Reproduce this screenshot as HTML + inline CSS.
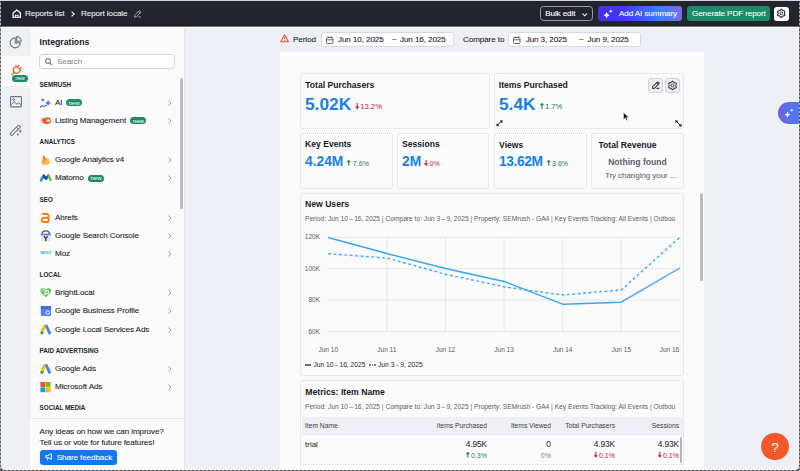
<!DOCTYPE html>
<html><head><meta charset="utf-8"><style>
html,body{margin:0;padding:0;}
body{width:800px;height:471px;overflow:hidden;position:relative;background:#eef0f6;font-family:"Liberation Sans", sans-serif;}
.t{position:absolute;line-height:1;white-space:nowrap;font-family:"Liberation Sans", sans-serif;}
</style></head><body>
<div style="position:absolute;left:0px;top:0px;width:800px;height:25px;background:#22252c;"></div>
<div style="position:absolute;left:0px;top:25px;width:800px;height:1px;background:#16181c;"></div>
<div style="position:absolute;left:0px;top:26px;width:800px;height:1px;background:#75777c;"></div>
<div style="position:absolute;left:0px;top:27px;width:800px;height:1px;background:#ffffff;"></div>
<svg style="position:absolute;left:11.5px;top:9px;overflow:visible" width="9.5" height="9.5" viewBox="0 0 9.5 9.5"><path d="M1.1 4 L4.75 0.9 L8.4 4 V8.4 H1.1 Z" fill="none" stroke="#f2f3f5" stroke-width="1.35" stroke-linejoin="round"/><path d="M3.5 8.4 V6.2 H6 V8.4" fill="none" stroke="#f2f3f5" stroke-width="1.1"/></svg>
<div class="t" style="left:25.00px;top:10.04px;font-size:8.1px;font-weight:400;color:#eceef2;-webkit-text-stroke:0.1px currentColor;letter-spacing:-0.1px;">Reports list</div>
<svg style="position:absolute;left:71px;top:11px;overflow:visible" width="4" height="6" viewBox="0 0 4 6"><path d="M0.6 0.6 L3.2 3 L0.6 5.4" fill="none" stroke="#f2f3f5" stroke-width="1.2"/></svg>
<div class="t" style="left:81.00px;top:10.04px;font-size:8.1px;font-weight:400;color:#eceef2;-webkit-text-stroke:0.1px currentColor;letter-spacing:-0.1px;">Report locale</div>
<svg style="position:absolute;left:132.5px;top:9.2px;overflow:visible" width="9.5" height="9.5" viewBox="0 0 24 24"><path d="M4 20h4l10.5 -10.5a2.828 2.828 0 1 0 -4 -4l-10.5 10.5v4 M13.5 6.5l4 4 M14 20h5" fill="none" stroke="#a3a7ae" stroke-width="2.40" stroke-linecap="round" stroke-linejoin="round"/></svg>
<div style="position:absolute;left:540px;top:6.2px;width:53.2px;height:15.3px;box-sizing:border-box;border:1px solid #9a9ea6;border-radius:3.5px;"></div>
<div class="t" style="left:545.20px;top:9.64px;font-size:8.1px;font-weight:400;color:#ffffff;-webkit-text-stroke:0.1px currentColor;letter-spacing:-0.1px;">Bulk edit</div>
<svg style="position:absolute;left:582px;top:12.5px;overflow:visible" width="5.5" height="3.5" viewBox="0 0 5.5 3.5"><path d="M0.6 0.6 L2.75 2.8 L4.9 0.6" fill="none" stroke="#fff" stroke-width="1.1"/></svg>
<div style="position:absolute;left:597.6px;top:6.3px;width:84.2px;height:14.5px;border-radius:3px;background:linear-gradient(75deg,#4f2de6 0%,#4437ee 30%,#3d62f2 55%,#3b7ef5 72%,#5d78ee 88%,#8068e4 100%);"></div>
<svg style="position:absolute;left:0;top:0;overflow:visible" width="700" height="30"><path d="M606.6 12.100000000000001 Q607.048 14.852 609.8000000000001 15.3 Q607.048 15.748000000000001 606.6 18.5 Q606.152 15.748000000000001 603.4 15.3 Q606.152 14.852 606.6 12.100000000000001Z" fill="#ffffff"/><path d="M610.8 9.299999999999999 Q611.0659999999999 10.934 612.6999999999999 11.2 Q611.0659999999999 11.466 610.8 13.1 Q610.534 11.466 608.9 11.2 Q610.534 10.934 610.8 9.299999999999999Z" fill="#ffffff"/></svg>
<div class="t" style="left:619.00px;top:9.64px;font-size:8.1px;font-weight:400;color:#ffffff;-webkit-text-stroke:0.1px currentColor;letter-spacing:-0.1px;">Add AI summary</div>
<div style="position:absolute;left:687px;top:6px;width:83px;height:15px;border-radius:3px;background:#1b8b68;"></div>
<div class="t" style="left:692.00px;top:9.64px;font-size:8.1px;font-weight:400;color:#ffffff;-webkit-text-stroke:0.1px currentColor;letter-spacing:-0.1px;">Generate PDF report</div>
<div style="position:absolute;left:774px;top:6.5px;width:15px;height:14px;border-radius:3px;background:#ffffff;"></div>
<svg style="position:absolute;left:777.2px;top:9.2px;overflow:visible" width="8.6" height="8.6"><path d="M4.30 0.09 L2.71 1.54 L0.65 2.19 L1.12 4.30 L0.65 6.41 L2.71 7.06 L4.30 8.51 L5.89 7.06 L7.95 6.41 L7.48 4.30 L7.95 2.19 L5.89 1.54 Z" fill="none" stroke="#22252c" stroke-width="1.1" stroke-linejoin="round"/><circle cx="4.3" cy="4.3" r="1.38" fill="none" stroke="#22252c" stroke-width="0.99"/></svg>
<div style="position:absolute;left:0px;top:28px;width:185px;height:443px;background:#fbfbfc;"></div>
<div style="position:absolute;left:1px;top:28px;width:29.7px;height:28.2px;background:#eef0f5;border-radius:0 2px 4px 0;"></div>
<div style="position:absolute;left:1px;top:86px;width:29.5px;height:385px;background:#eef0f5;border-radius:0 6px 0 0;"></div>
<div style="position:absolute;left:184px;top:28px;width:1px;height:443px;background:#e3e5ea;"></div>
<svg style="position:absolute;left:10px;top:36px;overflow:visible" width="12" height="12" viewBox="0 0 12 12"><path d="M5.2 1.9 A5 5 0 1 0 10.2 6.9 H5.2 Z" fill="none" stroke="#6e727b" stroke-width="1.1" stroke-linejoin="round"/><path d="M6.7 0.6 A4.6 4.6 0 0 1 11.3 5.2 H6.7 Z" fill="none" stroke="#6e727b" stroke-width="1.1" stroke-linejoin="round"/></svg>
<svg style="position:absolute;left:0;top:0;overflow:visible" width="40" height="90"><g transform="translate(16.3,70.3) rotate(45)" fill="none" stroke="#ee5a2a" stroke-width="1.15" stroke-linecap="round"><path d="M-1.6 -5.6 V-3 M1.6 -5.6 V-3"/><path d="M-3.2 -3 H3.2 V-0.4 A3.2 3.2 0 0 1 -3.2 -0.4 Z" stroke-linejoin="round"/><path d="M0 2.8 V6.6"/></g></svg>
<div style="position:absolute;left:12px;top:75.3px;width:16px;height:6.5px;background:#1b8b68;border-radius:3.5px;"></div>
<div class="t" style="left:20.00px;transform:translateX(-50%);top:76.47px;font-size:5px;font-weight:400;color:#ffffff;">new</div>
<svg style="position:absolute;left:10px;top:95.5px;overflow:visible" width="12" height="11.5" viewBox="0 0 12 11.5"><rect x="0.6" y="0.6" width="10.8" height="10.3" rx="0.8" fill="none" stroke="#6e727b" stroke-width="1.1"/><circle cx="3.7" cy="3.6" r="1" fill="none" stroke="#6e727b" stroke-width="0.9"/><path d="M0.8 9 L4.2 5.8 L7 8.2 L8.6 6.8 L11.2 9" fill="none" stroke="#6e727b" stroke-width="1"/></svg>
<svg style="position:absolute;left:0;top:0;overflow:visible" width="30" height="140"><g transform="translate(15.2,130.4) rotate(-45)"><rect x="-6.2" y="-1.4" width="12.4" height="2.8" rx="0.6" fill="none" stroke="#6e727b" stroke-width="1"/><path d="M3.2 -1.4 V1.4" stroke="#6e727b" stroke-width="0.9"/></g><path d="M20.3 129.29999999999998 Q20.566000000000003 130.934 22.2 131.2 Q20.566000000000003 131.46599999999998 20.3 133.1 Q20.034 131.46599999999998 18.400000000000002 131.2 Q20.034 130.934 20.3 129.29999999999998Z" fill="#6e727b"/><path d="M17.9 133.0 Q18.11 134.29 19.4 134.5 Q18.11 134.71 17.9 136.0 Q17.689999999999998 134.71 16.4 134.5 Q17.689999999999998 134.29 17.9 133.0Z" fill="#6e727b"/></svg>
<div class="t" style="left:39.60px;top:37.64px;font-size:8.7px;font-weight:700;color:#16181d;">Integrations</div>
<div style="position:absolute;left:39.4px;top:54.1px;width:136px;height:14.6px;box-sizing:border-box;border:1px solid #cfd2d8;border-radius:3.5px;background:#fff;"></div>
<svg style="position:absolute;left:44.6px;top:58.2px;overflow:visible" width="7.5" height="7.5" viewBox="0 0 7.5 7.5"><circle cx="3" cy="3" r="2.4" fill="none" stroke="#7c7f87" stroke-width="1.1"/><path d="M4.8 4.8 L7 7" stroke="#7c7f87" stroke-width="1.2"/></svg>
<div class="t" style="left:57.00px;top:58.04px;font-size:8.1px;font-weight:400;color:#8a8d94;-webkit-text-stroke:0.1px currentColor;letter-spacing:-0.1px;">Search</div>
<div class="t" style="left:39.60px;top:81.57px;font-size:6.3px;font-weight:700;color:#1d1f24;">SEMRUSH</div>
<svg style="position:absolute;left:39.6px;top:96.50px;overflow:visible" width="12" height="11" viewBox="0 0 12 11"><path d="M2.8 1.1 Q3.08 2.8200000000000003 4.8 3.1 Q3.08 3.38 2.8 5.1 Q2.5199999999999996 3.38 0.7999999999999998 3.1 Q2.5199999999999996 2.8200000000000003 2.8 1.1Z" fill="#4f5ff0"/><path d="M8.1 3.0999999999999996 Q8.52 5.68 11.1 6.1 Q8.52 6.52 8.1 9.1 Q7.68 6.52 5.1 6.1 Q7.68 5.68 8.1 3.0999999999999996Z" fill="#4a6af2"/><path d="M0.7 10 Q2 8.5 3.3 9.2 Q4.6 9.9 6.2 8.2" fill="none" stroke="#4b62ee" stroke-width="1.2" stroke-linecap="round"/></svg>
<div class="t" style="left:55.00px;top:98.64px;font-size:8.1px;font-weight:400;color:#1f2126;-webkit-text-stroke:0.1px currentColor;letter-spacing:-0.1px;">AI</div>
<div style="position:absolute;left:66px;top:99px;width:16px;height:7.2px;background:#1b8b68;border-radius:3.6px;"></div>
<div class="t" style="left:74.00px;transform:translateX(-50%);top:99.74px;font-size:6.1px;font-weight:400;color:#ffffff;">new</div>
<svg style="position:absolute;left:167.5px;top:99.7px;overflow:visible" width="4" height="6" viewBox="0 0 4 6"><path d="M0.6 0.6 L3 3 L0.6 5.4" fill="none" stroke="#8a8d94" stroke-width="0.9"/></svg>
<svg style="position:absolute;left:39.6px;top:114.50px;overflow:visible" width="12" height="11" viewBox="0 0 12 11"><path d="M0.5 5.2 Q3.5 2.6 7.6 2.2 A3.4 3.4 0 1 1 7.6 9 Q4 8.6 1 7.2 L3.6 6.4 Z" fill="#f0552a"/><circle cx="8.3" cy="5.6" r="1.5" fill="#fff"/><path d="M1.8 3.4 L4.2 3.6" stroke="#f58a5e" stroke-width="0.8"/></svg>
<div class="t" style="left:55.00px;top:116.64px;font-size:8.1px;font-weight:400;color:#1f2126;-webkit-text-stroke:0.1px currentColor;letter-spacing:-0.1px;">Listing Management</div>
<div style="position:absolute;left:130.4px;top:117px;width:16px;height:7.2px;background:#1b8b68;border-radius:3.6px;"></div>
<div class="t" style="left:138.40px;transform:translateX(-50%);top:117.74px;font-size:6.1px;font-weight:400;color:#ffffff;">new</div>
<svg style="position:absolute;left:167.5px;top:117.7px;overflow:visible" width="4" height="6" viewBox="0 0 4 6"><path d="M0.6 0.6 L3 3 L0.6 5.4" fill="none" stroke="#8a8d94" stroke-width="0.9"/></svg>
<div class="t" style="left:39.60px;top:138.77px;font-size:6.3px;font-weight:700;color:#1d1f24;">ANALYTICS</div>
<svg style="position:absolute;left:39.6px;top:154.10px;overflow:visible" width="12" height="11" viewBox="0 0 12 11"><path d="M1.8 10.6 L3.5 0.8 L6.4 5.2 L8 3.6 L10.3 9 Q6.5 11.6 1.8 10.6Z" fill="#f7bb3e"/><path d="M1.8 10.6 L3.5 0.8 L6.2 5.2 Z" fill="#f39220"/><path d="M3.4 2.6 L5 5" stroke="#e8651a" stroke-width="0.9"/></svg>
<div class="t" style="left:55.00px;top:156.24px;font-size:8.1px;font-weight:400;color:#1f2126;-webkit-text-stroke:0.1px currentColor;letter-spacing:-0.1px;">Google Analytics v4</div>
<svg style="position:absolute;left:167.5px;top:157.29999999999998px;overflow:visible" width="4" height="6" viewBox="0 0 4 6"><path d="M0.6 0.6 L3 3 L0.6 5.4" fill="none" stroke="#8a8d94" stroke-width="0.9"/></svg>
<svg style="position:absolute;left:39.6px;top:172.10px;overflow:visible" width="12" height="11" viewBox="0 0 12 11"><path d="M1 8.3 L3.7 3.6 L6 6.8 L8.5 3.6" fill="none" stroke="#2f48a8" stroke-width="2.5" stroke-linejoin="round" stroke-linecap="round"/><path d="M0.9 8.4 L2.4 5.8" stroke="#2fa6b8" stroke-width="2.2" stroke-linecap="round"/><path d="M8.7 4 L10.7 8.2" stroke="#5db84a" stroke-width="2.2" stroke-linecap="round"/><circle cx="8.9" cy="3.4" r="1" fill="#f08a30"/></svg>
<div class="t" style="left:55.00px;top:174.24px;font-size:8.1px;font-weight:400;color:#1f2126;-webkit-text-stroke:0.1px currentColor;letter-spacing:-0.1px;">Matomo</div>
<div style="position:absolute;left:88px;top:174.6px;width:16px;height:7.2px;background:#1b8b68;border-radius:3.6px;"></div>
<div class="t" style="left:96.00px;transform:translateX(-50%);top:175.34px;font-size:6.1px;font-weight:400;color:#ffffff;">new</div>
<svg style="position:absolute;left:167.5px;top:175.29999999999998px;overflow:visible" width="4" height="6" viewBox="0 0 4 6"><path d="M0.6 0.6 L3 3 L0.6 5.4" fill="none" stroke="#8a8d94" stroke-width="0.9"/></svg>
<div class="t" style="left:39.60px;top:196.57px;font-size:6.3px;font-weight:700;color:#1d1f24;">SEO</div>
<svg style="position:absolute;left:39.6px;top:211.50px;overflow:visible" width="12" height="11" viewBox="0 0 12 11"><path d="M2.2 2 H6.8 Q8.5 2 8.5 3.7 V10.6 M8.5 5.8 H3.9 Q1.9 5.8 1.9 7.9 Q1.9 10 3.9 10 H8.5" fill="none" stroke="#ff7614" stroke-width="1.9"/></svg>
<div class="t" style="left:55.00px;top:213.64px;font-size:8.1px;font-weight:400;color:#1f2126;-webkit-text-stroke:0.1px currentColor;letter-spacing:-0.1px;">Ahrefs</div>
<svg style="position:absolute;left:167.5px;top:214.7px;overflow:visible" width="4" height="6" viewBox="0 0 4 6"><path d="M0.6 0.6 L3 3 L0.6 5.4" fill="none" stroke="#8a8d94" stroke-width="0.9"/></svg>
<svg style="position:absolute;left:39.6px;top:229.50px;overflow:visible" width="12" height="12" viewBox="0 0 12 12"><rect x="1.2" y="5" width="9.2" height="6.2" fill="#e1e4ea"/><path d="M2.1 3.9 Q2.1 0.8 5.8 0.8 Q9.5 0.8 9.5 3.9" fill="none" stroke="#55595f" stroke-width="1.2"/><rect x="0.6" y="3.7" width="10.2" height="1.6" fill="#4285f4"/><path d="M4 6.2 L5.8 8.6 L7.6 6.2 M5.8 8.6 V11.2" fill="none" stroke="#35383d" stroke-width="1.3"/></svg>
<div class="t" style="left:55.00px;top:231.64px;font-size:8.1px;font-weight:400;color:#1f2126;-webkit-text-stroke:0.1px currentColor;letter-spacing:-0.1px;">Google Search Console</div>
<svg style="position:absolute;left:167.5px;top:232.7px;overflow:visible" width="4" height="6" viewBox="0 0 4 6"><path d="M0.6 0.6 L3 3 L0.6 5.4" fill="none" stroke="#8a8d94" stroke-width="0.9"/></svg>
<svg style="position:absolute;left:39.6px;top:247.50px;overflow:visible" width="12" height="11" viewBox="0 0 12 11"><text x="0.6" y="6.2" font-family="Liberation Sans" font-size="3.4" font-weight="700" fill="#33a3ea" textLength="10.6" lengthAdjust="spacingAndGlyphs">MOZ</text></svg>
<div class="t" style="left:55.00px;top:249.64px;font-size:8.1px;font-weight:400;color:#1f2126;-webkit-text-stroke:0.1px currentColor;letter-spacing:-0.1px;">Moz</div>
<svg style="position:absolute;left:167.5px;top:250.7px;overflow:visible" width="4" height="6" viewBox="0 0 4 6"><path d="M0.6 0.6 L3 3 L0.6 5.4" fill="none" stroke="#8a8d94" stroke-width="0.9"/></svg>
<div class="t" style="left:39.60px;top:272.17px;font-size:6.3px;font-weight:700;color:#1d1f24;">LOCAL</div>
<svg style="position:absolute;left:39.6px;top:287.10px;overflow:visible" width="12" height="11" viewBox="0 0 12 11"><path d="M5.8 10.2 L1.3 5.9 Q-0.3 4.1 0.8 2.3 Q2.6 -0.1 5.8 2.5 Q9 -0.1 10.8 2.3 Q11.9 4.1 10.3 5.9 Z" fill="#5cc55a"/><path d="M5 8.2 V3.6 H7.1 Q8.7 3.6 8.7 5.1 Q8.7 6.6 7.1 6.6 H5" fill="none" stroke="#fff" stroke-width="1.1"/><path d="M2 4.2 Q2.6 2.4 4.2 2.6" fill="none" stroke="#fff" stroke-width="0.8"/></svg>
<div class="t" style="left:55.00px;top:289.24px;font-size:8.1px;font-weight:400;color:#1f2126;-webkit-text-stroke:0.1px currentColor;letter-spacing:-0.1px;">BrightLocal</div>
<svg style="position:absolute;left:167.5px;top:290.3px;overflow:visible" width="4" height="6" viewBox="0 0 4 6"><path d="M0.6 0.6 L3 3 L0.6 5.4" fill="none" stroke="#8a8d94" stroke-width="0.9"/></svg>
<svg style="position:absolute;left:39.6px;top:305.10px;overflow:visible" width="12" height="12" viewBox="0 0 12 12"><rect x="0.8" y="1.6" width="10.3" height="9.3" rx="1.1" fill="#4f80f0"/><rect x="0.8" y="0.9" width="10.3" height="3" rx="0.8" fill="#3266d8"/><path d="M3.4 0.9 V3.9 M6 0.9 V3.9 M8.5 0.9 V3.9" stroke="#6e98f5" stroke-width="0.5"/><circle cx="7.7" cy="7.6" r="1.8" fill="none" stroke="#fff" stroke-width="0.9"/></svg>
<div class="t" style="left:55.00px;top:307.24px;font-size:8.1px;font-weight:400;color:#1f2126;-webkit-text-stroke:0.1px currentColor;letter-spacing:-0.1px;">Google Business Profile</div>
<svg style="position:absolute;left:167.5px;top:308.3px;overflow:visible" width="4" height="6" viewBox="0 0 4 6"><path d="M0.6 0.6 L3 3 L0.6 5.4" fill="none" stroke="#8a8d94" stroke-width="0.9"/></svg>
<svg style="position:absolute;left:39.6px;top:323.50px;overflow:visible" width="12" height="11" viewBox="0 0 12 11"><path d="M4.7 2.1 L1.9 7.9" stroke="#fbbc04" stroke-width="2.9" stroke-linecap="round"/><path d="M6.4 2.1 L9.6 8.9" stroke="#4285f4" stroke-width="2.9" stroke-linecap="round"/><circle cx="2" cy="8.9" r="1.6" fill="#34a853"/></svg>
<div class="t" style="left:55.00px;top:325.64px;font-size:8.1px;font-weight:400;color:#1f2126;-webkit-text-stroke:0.1px currentColor;letter-spacing:-0.1px;">Google Local Services Ads</div>
<svg style="position:absolute;left:167.5px;top:326.7px;overflow:visible" width="4" height="6" viewBox="0 0 4 6"><path d="M0.6 0.6 L3 3 L0.6 5.4" fill="none" stroke="#8a8d94" stroke-width="0.9"/></svg>
<div class="t" style="left:39.60px;top:347.57px;font-size:6.3px;font-weight:700;color:#1d1f24;">PAID ADVERTISING</div>
<svg style="position:absolute;left:39.6px;top:362.90px;overflow:visible" width="12" height="11" viewBox="0 0 12 11"><g transform="translate(0,0.4)"><path d="M4.7 2.1 L1.9 7.9" stroke="#fbbc04" stroke-width="2.9" stroke-linecap="round"/><path d="M6.4 2.1 L9.6 8.9" stroke="#4285f4" stroke-width="2.9" stroke-linecap="round"/><circle cx="2" cy="8.9" r="1.6" fill="#34a853"/></g></svg>
<div class="t" style="left:55.00px;top:365.04px;font-size:8.1px;font-weight:400;color:#1f2126;-webkit-text-stroke:0.1px currentColor;letter-spacing:-0.1px;">Google Ads</div>
<svg style="position:absolute;left:167.5px;top:366.09999999999997px;overflow:visible" width="4" height="6" viewBox="0 0 4 6"><path d="M0.6 0.6 L3 3 L0.6 5.4" fill="none" stroke="#8a8d94" stroke-width="0.9"/></svg>
<svg style="position:absolute;left:39.6px;top:380.90px;overflow:visible" width="12" height="12" viewBox="0 0 12 12"><rect x="0.4" y="1" width="4.9" height="4.9" fill="#f25022"/><rect x="5.7" y="1" width="4.9" height="4.9" fill="#7fba00"/><rect x="0.4" y="6.3" width="4.9" height="4.9" fill="#00a4ef"/><rect x="5.7" y="6.3" width="4.9" height="4.9" fill="#ffb900"/></svg>
<div class="t" style="left:55.00px;top:383.04px;font-size:8.1px;font-weight:400;color:#1f2126;-webkit-text-stroke:0.1px currentColor;letter-spacing:-0.1px;">Microsoft Ads</div>
<svg style="position:absolute;left:167.5px;top:384.09999999999997px;overflow:visible" width="4" height="6" viewBox="0 0 4 6"><path d="M0.6 0.6 L3 3 L0.6 5.4" fill="none" stroke="#8a8d94" stroke-width="0.9"/></svg>
<div class="t" style="left:39.60px;top:405.27px;font-size:6.3px;font-weight:700;color:#1d1f24;">SOCIAL MEDIA</div>
<div style="position:absolute;left:180.3px;top:77.8px;width:2.6px;height:131px;background:#b9bbc0;border-radius:1.5px;"></div>
<div style="position:absolute;left:30px;top:417.5px;width:154px;height:53.5px;background:#fbfbfc;"></div>
<div style="position:absolute;left:30px;top:417.8px;width:154px;height:1.4px;background:#e4e6ea;"></div>
<div class="t" style="left:39.60px;top:428.44px;font-size:8.1px;font-weight:400;color:#25272c;-webkit-text-stroke:0.1px currentColor;letter-spacing:-0.1px;">Any ideas on how we can improve?</div>
<div class="t" style="left:39.60px;top:438.64px;font-size:8.1px;font-weight:400;color:#25272c;-webkit-text-stroke:0.1px currentColor;letter-spacing:-0.1px;">Tell us or vote for future features!</div>
<div style="position:absolute;left:39.6px;top:449.8px;width:77.7px;height:14.9px;background:#1178f2;border-radius:3px;"></div>
<svg style="position:absolute;left:44.5px;top:453.3px;overflow:visible" width="7.5" height="7.5" viewBox="0 0 7.5 7.5"><path d="M0.8 2.6 H2.5 L6.3 0.7 V6.3 L2.5 4.4 H0.8 Z" fill="none" stroke="#fff" stroke-width="1" stroke-linejoin="round"/><path d="M2 4.5 L2.6 7" stroke="#fff" stroke-width="1"/></svg>
<div class="t" style="left:56.80px;top:453.64px;font-size:8.1px;font-weight:400;color:#ffffff;-webkit-text-stroke:0.1px currentColor;letter-spacing:-0.1px;">Share feedback</div>
<svg style="position:absolute;left:280px;top:34.3px;overflow:visible" width="9.2" height="8.5" viewBox="0 0 9.2 8.5"><path d="M4.6 0.8 L8.5 7.8 H0.7 Z" fill="none" stroke="#e5532a" stroke-width="1.1" stroke-linejoin="round"/><path d="M4.6 3.2 V5.3" stroke="#e5532a" stroke-width="1"/><circle cx="4.6" cy="6.5" r="0.5" fill="#e5532a"/></svg>
<div class="t" style="left:293.00px;top:35.84px;font-size:8.1px;font-weight:400;color:#1f2126;-webkit-text-stroke:0.1px currentColor;letter-spacing:-0.1px;">Period</div>
<div style="position:absolute;left:320.7px;top:32.4px;width:133.3px;height:14.2px;box-sizing:border-box;border:1px solid #d5d8de;border-radius:3px;background:#fff;"></div>
<svg style="position:absolute;left:325.7px;top:35.5px;overflow:visible" width="7.5" height="8" viewBox="0 0 7.5 8"><rect x="0.5" y="1.5" width="6.5" height="6" rx="0.8" fill="none" stroke="#55585f" stroke-width="0.9"/><path d="M0.5 3.8 H7 M2.2 0.3 V2.3 M5.3 0.3 V2.3" stroke="#55585f" stroke-width="0.9"/></svg>
<div class="t" style="left:338.00px;top:35.84px;font-size:8.1px;font-weight:400;color:#1f2126;-webkit-text-stroke:0.1px currentColor;letter-spacing:-0.1px;">Jun 10, 2025</div>
<div class="t" style="left:392.00px;top:34.84px;font-size:8.1px;font-weight:400;color:#1f2126;-webkit-text-stroke:0.1px currentColor;letter-spacing:-0.1px;">–</div>
<div class="t" style="left:400.00px;top:35.84px;font-size:8.1px;font-weight:400;color:#1f2126;-webkit-text-stroke:0.1px currentColor;letter-spacing:-0.1px;">Jun 16, 2025</div>
<div class="t" style="left:463.00px;top:35.84px;font-size:8.1px;font-weight:400;color:#1f2126;-webkit-text-stroke:0.1px currentColor;letter-spacing:-0.1px;">Compare to</div>
<div style="position:absolute;left:508px;top:32.4px;width:133px;height:14.2px;box-sizing:border-box;border:1px solid #d5d8de;border-radius:3px;background:#fff;"></div>
<svg style="position:absolute;left:513px;top:35.5px;overflow:visible" width="7.5" height="8" viewBox="0 0 7.5 8"><rect x="0.5" y="1.5" width="6.5" height="6" rx="0.8" fill="none" stroke="#55585f" stroke-width="0.9"/><path d="M0.5 3.8 H7 M2.2 0.3 V2.3 M5.3 0.3 V2.3" stroke="#55585f" stroke-width="0.9"/></svg>
<div class="t" style="left:525.70px;top:35.84px;font-size:8.1px;font-weight:400;color:#1f2126;-webkit-text-stroke:0.1px currentColor;letter-spacing:-0.1px;">Jun 3, 2025</div>
<div class="t" style="left:579.00px;top:34.84px;font-size:8.1px;font-weight:400;color:#1f2126;-webkit-text-stroke:0.1px currentColor;letter-spacing:-0.1px;">–</div>
<div class="t" style="left:587.50px;top:35.84px;font-size:8.1px;font-weight:400;color:#1f2126;-webkit-text-stroke:0.1px currentColor;letter-spacing:-0.1px;">Jun 9, 2025</div>
<div style="position:absolute;left:280.2px;top:52px;width:423.8px;height:419px;background:#fbfbfc;"></div>
<div style="position:absolute;left:700.2px;top:193px;width:2.9px;height:88px;background:#b9bbc0;border-radius:1.5px;"></div>
<div style="position:absolute;left:300px;top:73px;width:190px;height:56px;box-sizing:border-box;border:1px dotted #d7d9de;border-radius:3px;"></div>
<div style="position:absolute;left:494px;top:73px;width:190px;height:56px;box-sizing:border-box;border:1px dotted #d7d9de;border-radius:3px;"></div>
<div style="position:absolute;left:300px;top:133px;width:93px;height:56px;box-sizing:border-box;border:1px dotted #d7d9de;border-radius:3px;"></div>
<div style="position:absolute;left:397px;top:133px;width:92px;height:56px;box-sizing:border-box;border:1px dotted #d7d9de;border-radius:3px;"></div>
<div style="position:absolute;left:494px;top:133px;width:93px;height:56px;box-sizing:border-box;border:1px dotted #d7d9de;border-radius:3px;"></div>
<div style="position:absolute;left:591px;top:133px;width:93px;height:56px;box-sizing:border-box;border:1px dotted #d7d9de;border-radius:3px;"></div>
<div class="t" style="left:305.20px;top:80.72px;font-size:8.6px;font-weight:700;color:#16181d;">Total Purchasers</div>
<div class="t" style="left:305.00px;top:95.86px;font-size:17.3px;font-weight:700;color:#1a7fe6;">5.02K</div>
<div class="t" style="left:354.60px;top:103.28px;font-size:7.7px;color:#c0233a;"><svg width="4.4" height="6" viewBox="0 0 4.4 6" style="margin-right:1.2px;overflow:visible"><path d="M2.2 0 V5.2 M0.4 3.5 L2.2 5.5 L4.0 3.5" fill="none" stroke="#c0233a" stroke-width="1.1"/></svg>13.2%</div>
<div class="t" style="left:498.80px;top:80.88px;font-size:8.65px;font-weight:700;color:#16181d;">Items Purchased</div>
<div class="t" style="left:499.00px;top:95.86px;font-size:17.3px;font-weight:700;color:#1a7fe6;">5.4K</div>
<div class="t" style="left:539.60px;top:103.28px;font-size:7.7px;color:#1a7e5a;"><svg width="3.8" height="6" viewBox="0 0 3.8 6" style="margin-right:1.5px;overflow:visible"><path d="M1.9 6 V0.8 M0.4 2.1999999999999997 L1.9 0.5 L3.4 2.1999999999999997" fill="none" stroke="#1a7e5a" stroke-width="1.1"/></svg>1.7%</div>
<div style="position:absolute;left:648px;top:77.8px;width:14.6px;height:15px;box-sizing:border-box;border:1px solid #cfd2d8;border-radius:3px;background:#eceef3;"></div>
<div style="position:absolute;left:665px;top:77.8px;width:14.6px;height:15px;box-sizing:border-box;border:1px solid #cfd2d8;border-radius:3px;background:#eceef3;"></div>
<svg style="position:absolute;left:650.5px;top:80.2px;overflow:visible" width="10" height="10" viewBox="0 0 24 24"><path d="M4 20h4l10.5 -10.5a2.828 2.828 0 1 0 -4 -4l-10.5 10.5v4 M13.5 6.5l4 4 M14 20h5" fill="none" stroke="#3a3d44" stroke-width="2.64" stroke-linecap="round" stroke-linejoin="round"/></svg>
<svg style="position:absolute;left:667.8px;top:80.8px;overflow:visible" width="9" height="9"><path d="M4.50 0.09 L2.84 1.62 L0.68 2.29 L1.17 4.50 L0.68 6.70 L2.84 7.38 L4.50 8.91 L6.16 7.38 L8.32 6.71 L7.83 4.50 L8.32 2.29 L6.17 1.62 Z" fill="none" stroke="#3a3d44" stroke-width="1.1" stroke-linejoin="round"/><circle cx="4.5" cy="4.5" r="1.44" fill="none" stroke="#3a3d44" stroke-width="0.99"/></svg>
<svg style="position:absolute;left:496px;top:120.3px;overflow:visible" width="7" height="6.5" viewBox="0 0 7 6.5"><path d="M1.8 4.8 L5.2 1.6" stroke="#2a2c31" stroke-width="1"/><path d="M0.6 6 L0.9 3.6 L3 5.7 Z M6.4 0.5 L6.1 2.9 L4 0.8 Z" fill="#2a2c31" stroke="#2a2c31" stroke-width="0.5" stroke-linejoin="round"/></svg>
<svg style="position:absolute;left:675.3px;top:120px;overflow:visible" width="7" height="7" viewBox="0 0 7 7"><path d="M1.6 1.6 L5.2 5.2" stroke="#2a2c31" stroke-width="1"/><path d="M0.5 0.5 L2.9 0.8 L0.8 2.9 Z M6.4 6.4 L4 6.1 L6.1 4 Z" fill="#2a2c31" stroke="#2a2c31" stroke-width="0.5" stroke-linejoin="round"/></svg>
<svg style="position:absolute;left:623px;top:111.5px;overflow:visible" width="6" height="9" viewBox="0 0 6 9"><path d="M0.5 0.5 V7.5 L2.2 5.9 L3.5 8.6 L4.7 8.1 L3.5 5.4 L5.7 5.3 Z" fill="#111" stroke="#fff" stroke-width="0.5"/></svg>
<div class="t" style="left:305.00px;top:140.42px;font-size:8.6px;font-weight:700;color:#16181d;">Key Events</div>
<div class="t" style="left:305.00px;top:154.72px;font-size:13.8px;font-weight:700;color:#1a7fe6;">4.24M</div>
<div class="t" style="left:347.40px;top:159.79px;font-size:7.1px;color:#1a7e5a;"><svg width="3.6" height="5.7" viewBox="0 0 3.6 5.7" style="margin-right:1.8px;overflow:visible"><path d="M1.8 5.7 V0.8 M0.4 2.1 L1.8 0.5 L3.2 2.1" fill="none" stroke="#1a7e5a" stroke-width="1.1"/></svg>7.6%</div>
<div class="t" style="left:402.00px;top:140.42px;font-size:8.6px;font-weight:700;color:#16181d;">Sessions</div>
<div class="t" style="left:402.00px;top:154.72px;font-size:13.8px;font-weight:700;color:#1a7fe6;">2M</div>
<div class="t" style="left:424.00px;top:159.79px;font-size:7.1px;color:#c0233a;"><svg width="4.2" height="5.7" viewBox="0 0 4.2 5.7" style="margin-right:1.3px;overflow:visible"><path d="M2.1 0 V4.9 M0.4 3.3000000000000003 L2.1 5.2 L3.8000000000000003 3.3000000000000003" fill="none" stroke="#c0233a" stroke-width="1.1"/></svg>0%</div>
<div class="t" style="left:499.10px;top:140.52px;font-size:8.6px;font-weight:700;color:#16181d;">Views</div>
<div class="t" style="left:499.00px;top:154.72px;font-size:13.8px;font-weight:700;color:#1a7fe6;letter-spacing:-0.42px;">13.62M</div>
<div class="t" style="left:546.60px;top:159.79px;font-size:7.1px;color:#1a7e5a;"><svg width="3.6" height="5.7" viewBox="0 0 3.6 5.7" style="margin-right:1.8px;overflow:visible"><path d="M1.8 5.7 V0.8 M0.4 2.1 L1.8 0.5 L3.2 2.1" fill="none" stroke="#1a7e5a" stroke-width="1.1"/></svg>3.6%</div>
<div class="t" style="left:598.50px;top:140.52px;font-size:8.6px;font-weight:700;color:#16181d;">Total Revenue</div>
<div class="t" style="left:637.50px;transform:translateX(-50%);top:158.02px;font-size:8.6px;font-weight:700;color:#5f6168;">Nothing found</div>
<div class="t" style="left:604.90px;top:171.94px;font-size:8.1px;font-weight:400;color:#6b6e75;-webkit-text-stroke:0.1px currentColor;letter-spacing:-0.1px;">Try changing your ...</div>
<div style="position:absolute;left:300px;top:193px;width:384px;height:183px;box-sizing:border-box;border:1px dotted #d7d9de;border-radius:3px;"></div>
<div class="t" style="left:305.00px;top:199.93px;font-size:8.65px;font-weight:700;color:#16181d;">New Users</div>
<div style="position:absolute;left:305px;top:214.07px;width:373.5px;height:10px;overflow:hidden"><div class="t" style="left:0;top:2px;font-size:6.65px;color:#5a5d65">Period: Jun 10 – 16, 2025 | Compare to: Jun 3 – 9, 2025 | Property: SEMrush - GA4 | Key Events Tracking: All Events | Outbou</div></div>
<svg style="position:absolute;left:0;top:0" width="800" height="471"><path d="M328.25 237.3 H679.85" stroke="#e3e5ea" stroke-width="0.9"/><path d="M328.25 268.7 H679.85" stroke="#e3e5ea" stroke-width="0.9"/><path d="M328.25 300.1 H679.85" stroke="#e3e5ea" stroke-width="0.9"/><path d="M328.25 331.5 H679.85" stroke="#e3e5ea" stroke-width="0.9"/><path d="M386.85 237.3 V331.5" stroke="#e3e5ea" stroke-width="0.9"/><path d="M445.45 237.3 V331.5" stroke="#e3e5ea" stroke-width="0.9"/><path d="M504.05 237.3 V331.5" stroke="#e3e5ea" stroke-width="0.9"/><path d="M562.65 237.3 V331.5" stroke="#e3e5ea" stroke-width="0.9"/><path d="M621.25 237.3 V331.5" stroke="#e3e5ea" stroke-width="0.9"/><path d="M328.25 237.5 L386.85 253.5 L445.45 268.5 L504.05 281.5 L562.65 304.2 L621.25 302.2 L679.85 268" fill="none" stroke="#38a6f2" stroke-width="1.4" stroke-linejoin="round"/><path d="M328.25 253.75 L386.85 258 L445.45 274.25 L504.05 286.75 L562.65 295 L621.25 290 L679.85 237.25" fill="none" stroke="#38a6f2" stroke-width="1.4" stroke-dasharray="2.8 2.6"/></svg>
<div class="t" style="right:480.00px;top:234.00px;font-size:6.5px;font-weight:400;color:#55585f;">120K</div>
<div class="t" style="right:480.00px;top:265.90px;font-size:6.5px;font-weight:400;color:#55585f;">100K</div>
<div class="t" style="right:480.00px;top:297.00px;font-size:6.5px;font-weight:400;color:#55585f;">80K</div>
<div class="t" style="right:480.00px;top:328.80px;font-size:6.5px;font-weight:400;color:#55585f;">60K</div>
<div class="t" style="left:328.25px;transform:translateX(-50%);top:347.00px;font-size:6.5px;font-weight:400;color:#55585f;">Jun 10</div>
<div class="t" style="left:386.85px;transform:translateX(-50%);top:347.00px;font-size:6.5px;font-weight:400;color:#55585f;">Jun 11</div>
<div class="t" style="left:445.45px;transform:translateX(-50%);top:347.00px;font-size:6.5px;font-weight:400;color:#55585f;">Jun 12</div>
<div class="t" style="left:504.05px;transform:translateX(-50%);top:347.00px;font-size:6.5px;font-weight:400;color:#55585f;">Jun 13</div>
<div class="t" style="left:562.65px;transform:translateX(-50%);top:347.00px;font-size:6.5px;font-weight:400;color:#55585f;">Jun 14</div>
<div class="t" style="left:621.25px;transform:translateX(-50%);top:347.00px;font-size:6.5px;font-weight:400;color:#55585f;">Jun 15</div>
<div class="t" style="right:120.75px;top:347.00px;font-size:6.5px;font-weight:400;color:#55585f;">Jun 16</div>
<div style="position:absolute;left:305px;top:364px;width:6px;height:2px;background:#6a6d73;"></div>
<div class="t" style="left:313.40px;top:362.23px;font-size:6.7px;font-weight:400;color:#1d1f24;">Jun 10 - 16, 2025</div>
<div style="position:absolute;left:369.4px;top:364px;width:1.5px;height:2px;background:#7a7d83;"></div>
<div style="position:absolute;left:371.79999999999995px;top:364px;width:1.5px;height:2px;background:#7a7d83;"></div>
<div style="position:absolute;left:374.2px;top:364px;width:1.5px;height:2px;background:#7a7d83;"></div>
<div class="t" style="left:378.00px;top:362.23px;font-size:6.7px;font-weight:400;color:#1d1f24;">Jun 3 - 9, 2025</div>
<div style="position:absolute;left:300px;top:380px;width:384px;height:120px;box-sizing:border-box;border:1px dotted #d7d9de;border-radius:3px;"></div>
<div class="t" style="left:305.20px;top:387.94px;font-size:8.7px;font-weight:700;color:#16181d;">Metrics: Item Name</div>
<div style="position:absolute;left:305px;top:402.07px;width:373.5px;height:10px;overflow:hidden"><div class="t" style="left:0;top:2px;font-size:6.65px;color:#5a5d65">Period: Jun 10 – 16, 2025 | Compare to: Jun 3 – 9, 2025 | Property: SEMrush - GA4 | Key Events Tracking: All Events | Outbou</div></div>
<div style="position:absolute;left:301.5px;top:417.3px;width:381px;height:16.9px;background:#eef0f5;"></div>
<div style="position:absolute;left:301.5px;top:434px;width:381px;height:0.8px;background:#e3e5ea;"></div>
<div class="t" style="left:305.00px;top:422.83px;font-size:6.7px;font-weight:400;color:#3a3d44;">Item Name</div>
<div class="t" style="right:313.00px;top:422.83px;font-size:6.7px;font-weight:400;color:#3a3d44;">Items Purchased</div>
<div class="t" style="right:249.10px;top:422.83px;font-size:6.7px;font-weight:400;color:#3a3d44;">Items Viewed</div>
<div class="t" style="right:185.00px;top:422.83px;font-size:6.7px;font-weight:400;color:#3a3d44;">Total Purchasers</div>
<div class="t" style="right:121.00px;top:422.83px;font-size:6.7px;font-weight:400;color:#3a3d44;">Sessions</div>
<div class="t" style="left:305.00px;top:441.13px;font-size:8.0px;font-weight:400;color:#1f2126;-webkit-text-stroke:0.1px currentColor;-webkit-text-stroke:0;">trial</div>
<div class="t" style="right:313.00px;top:440.19px;font-size:8.4px;font-weight:400;color:#1f2126;-webkit-text-stroke:0.1px currentColor;letter-spacing:-0.15px;-webkit-text-stroke:0;">4.95K</div>
<div class="t" style="right:313.00px;top:451.77px;font-size:7.0px;color:#1a7e5a;"><svg width="3.6" height="5.4" viewBox="0 0 3.6 5.4" style="margin-right:1.2px;overflow:visible"><path d="M1.8 5.4 V0.8 M0.4 2.1 L1.8 0.5 L3.2 2.1" fill="none" stroke="#1a7e5a" stroke-width="1.1"/></svg>0.3%</div>
<div class="t" style="right:249.10px;top:440.19px;font-size:8.4px;font-weight:400;color:#1f2126;-webkit-text-stroke:0.1px currentColor;-webkit-text-stroke:0;">0</div>
<div class="t" style="right:249.10px;top:451.77px;font-size:7.0px;font-weight:400;color:#7c7f87;">0%</div>
<div class="t" style="right:185.00px;top:440.19px;font-size:8.4px;font-weight:400;color:#1f2126;-webkit-text-stroke:0.1px currentColor;letter-spacing:-0.15px;-webkit-text-stroke:0;">4.93K</div>
<div class="t" style="right:185.00px;top:451.77px;font-size:7.0px;color:#c0233a;"><svg width="3.6" height="5.4" viewBox="0 0 3.6 5.4" style="margin-right:1.2px;overflow:visible"><path d="M1.8 0 V4.6000000000000005 M0.4 3.3000000000000007 L1.8 4.9 L3.2 3.3000000000000007" fill="none" stroke="#c0233a" stroke-width="1.1"/></svg>0.1%</div>
<div class="t" style="right:121.00px;top:440.19px;font-size:8.4px;font-weight:400;color:#1f2126;-webkit-text-stroke:0.1px currentColor;letter-spacing:-0.15px;-webkit-text-stroke:0;">4.93K</div>
<div class="t" style="right:121.00px;top:451.77px;font-size:7.0px;color:#c0233a;"><svg width="3.6" height="5.4" viewBox="0 0 3.6 5.4" style="margin-right:1.2px;overflow:visible"><path d="M1.8 0 V4.6000000000000005 M0.4 3.3000000000000007 L1.8 4.9 L3.2 3.3000000000000007" fill="none" stroke="#c0233a" stroke-width="1.1"/></svg>0.1%</div>
<div style="position:absolute;left:301.5px;top:463.6px;width:381px;height:0.9px;background:#e6e8ec;"></div>
<div style="position:absolute;left:680.1px;top:437px;width:2.4px;height:25.5px;background:#b3b5ba;border-radius:1.2px;"></div>
<div style="position:absolute;left:1px;top:28px;width:798px;height:442px;box-sizing:border-box;border:1px solid rgba(255,255,255,0.85);border-top:none;clip-path:inset(0 -10px -10px -10px);border-radius:0 0 4.5px 4.5px;box-shadow:0 0 0 5px #6a6c70;pointer-events:none"></div>
<div style="position:absolute;left:777.7px;top:102.2px;width:30px;height:21.7px;border-radius:11px;background:linear-gradient(90deg,#6c5fe2,#5a72ee 40%,#3f80f0);"></div>
<svg style="position:absolute;left:0;top:0;overflow:visible" width="800" height="130"><path d="M787.5 111.4 Q787.92 113.98 790.5 114.4 Q787.92 114.82000000000001 787.5 117.4 Q787.08 114.82000000000001 784.5 114.4 Q787.08 113.98 787.5 111.4Z" fill="#ffffff"/><path d="M791.8 108.4 Q792.0519999999999 109.94800000000001 793.5999999999999 110.2 Q792.0519999999999 110.452 791.8 112.0 Q791.548 110.452 790.0 110.2 Q791.548 109.94800000000001 791.8 108.4Z" fill="#ffffff"/></svg>
<div style="position:absolute;left:761.2px;top:432.5px;width:27.8px;height:27.8px;border-radius:50%;background:#f4582a;"></div>
<div class="t" style="left:775.20px;transform:translateX(-50%);top:440.80px;font-size:13px;font-weight:400;color:#ffffff;-webkit-text-stroke:0.1px currentColor;">?</div>
<div style="position:absolute;left:0px;top:0px;width:800px;height:1px;background:#d6d7da;"></div>
<div style="position:absolute;left:0px;top:1px;width:1px;height:470px;background:repeating-linear-gradient(180deg,#5e6064 0 2px,#b4b6ba 2px 4px);"></div>
<div style="position:absolute;left:799px;top:1px;width:1px;height:470px;background:repeating-linear-gradient(180deg,#505256 0 2.4px,#a9abaf 2.4px 4px);"></div>
<div style="position:absolute;left:0px;top:470px;width:800px;height:1px;background:repeating-linear-gradient(90deg,#45474b 0 2.4px,#a0a2a6 2.4px 4px);"></div>
</body></html>
